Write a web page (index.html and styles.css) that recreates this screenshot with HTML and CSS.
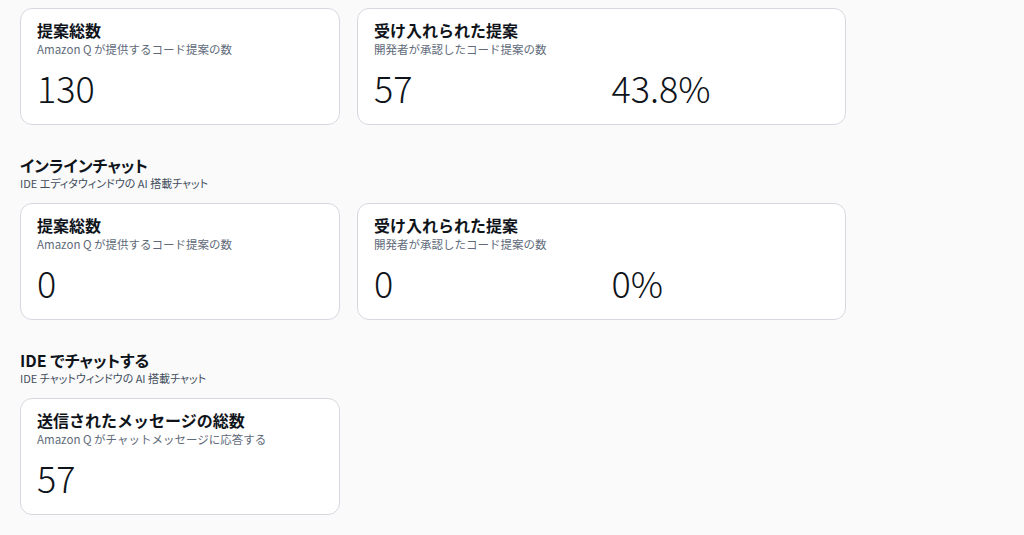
FILE: index.html
```html
<!DOCTYPE html>
<html lang="ja">
<head>
<meta charset="utf-8">
<link rel="stylesheet" href="styles.css">
</head>
<body>
<main class="page">
  <section class="section">
    <div class="cards">
      <div class="card card-sm">
        <h3 class="card-title">提案総数</h3>
        <p class="card-desc">Amazon Q が提供するコード提案の数</p>
        <div class="values"><span class="value">130</span></div>
      </div>
      <div class="card card-lg">
        <h3 class="card-title">受け入れられた提案</h3>
        <p class="card-desc">開発者が承認したコード提案の数</p>
        <div class="values two"><span class="value">57</span><span class="value">43.8%</span></div>
      </div>
    </div>
  </section>

  <section class="section">
    <header class="section-head">
      <h2 class="section-title">インラインチャット</h2>
      <p class="section-desc">IDE エディタウィンドウの AI 搭載チャット</p>
    </header>
    <div class="cards">
      <div class="card card-sm">
        <h3 class="card-title">提案総数</h3>
        <p class="card-desc">Amazon Q が提供するコード提案の数</p>
        <div class="values"><span class="value">0</span></div>
      </div>
      <div class="card card-lg">
        <h3 class="card-title">受け入れられた提案</h3>
        <p class="card-desc">開発者が承認したコード提案の数</p>
        <div class="values two"><span class="value">0</span><span class="value">0%</span></div>
      </div>
    </div>
  </section>

  <section class="section">
    <header class="section-head">
      <h2 class="section-title">IDE でチャットする</h2>
      <p class="section-desc">IDE チャットウィンドウの AI 搭載チャット</p>
    </header>
    <div class="cards">
      <div class="card card-sm">
        <h3 class="card-title">送信されたメッセージの総数</h3>
        <p class="card-desc">Amazon Q がチャットメッセージに応答する</p>
        <div class="values"><span class="value">57</span></div>
      </div>
    </div>
  </section>
</main>
</body>
</html>
```

FILE: styles.css
```css
* { box-sizing: border-box; }
html, body {
  margin: 0;
  padding: 0;
  background: #fafafa;
}
body {
  font-family: "Noto Sans CJK JP", "Noto Sans", sans-serif;
  color: #0f141a;
  width: 1024px;
  height: 535px;
  overflow: hidden;
}
.page {
  padding: 8px 0 0 20px;
  display: flex;
  flex-direction: column;
  gap: 29px;
}
.section {
  display: flex;
  flex-direction: column;
}
.section-head {
  margin-bottom: 12px;
}
.section-title {
  margin: 0;
  font-size: 16px;
  line-height: 22px;
  font-weight: 700;
  font-feature-settings: "palt";
  color: #0f141a;
}
.section-desc {
  margin: 0;
  font-size: 11px;
  line-height: 15px;
  font-feature-settings: "palt";
  color: #414d5c;
}
.cards {
  display: flex;
  gap: 17px;
}
.card {
  background: #ffffff;
  border: 1px solid #d5d9df;
  border-radius: 12px;
  height: 117px;
  padding: 10px 16px 14px 16px;
}
.card-sm { width: 320px; }
.card-lg { width: 489px; }
.card-title {
  margin: 0;
  font-size: 16px;
  line-height: 22px;
  font-weight: 700;
  color: #0f141a;
}
.card-desc {
  margin: 0;
  font-size: 11.5px;
  line-height: 17px;
  color: #5f6b7a;
}
.values {
  margin-top: 9px;
  display: grid;
  grid-template-columns: 1fr;
}
.values.two {
  grid-template-columns: 1fr 1fr;
  column-gap: 20px;
}
.value {
  font-size: 36px;
  line-height: 40px;
  font-weight: 300;
  color: #0f141a;
}
```
